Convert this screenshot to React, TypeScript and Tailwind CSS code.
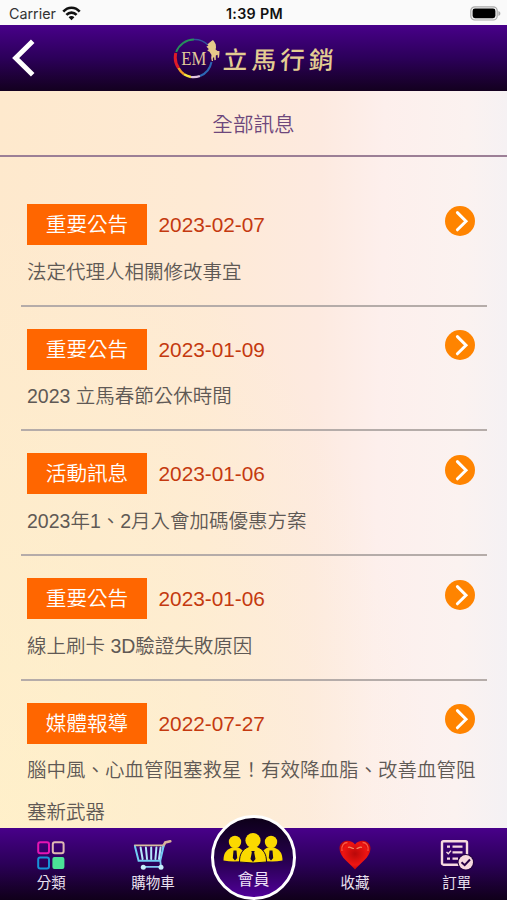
import type { ReactNode } from "react";

interface NewsItem {
  tag: string;
  date: string;
  title: string;
}

const news: NewsItem[] = [
  { tag: "重要公告", date: "2023-02-07", title: "法定代理人相關修改事宜" },
  { tag: "重要公告", date: "2023-01-09", title: "2023 立馬春節公休時間" },
  { tag: "活動訊息", date: "2023-01-06", title: "2023年1、2月入會加碼優惠方案" },
  { tag: "重要公告", date: "2023-01-06", title: "線上刷卡 3D驗證失敗原因" },
  { tag: "媒體報導", date: "2022-07-27", title: "腦中風、心血管阻塞救星！有效降血脂、改善血管阻塞新武器" },
];

const StatusBar = () => (
  <div className="grid h-[25px] shrink-0 grid-cols-3 items-center bg-[#fafafa] pt-[2px] pr-[6px] pl-[9px] font-['Inter','Liberation_Sans',sans-serif] text-[#111]">
    <div className="flex items-center gap-[6px] text-[14.3px] text-[#333]">
      <span>Carrier</span>
      <svg width="19" height="15" viewBox="0 0 19 15" fill="none" stroke="#111" strokeWidth="2.6">
        <path d="M1.3 5.6C6 0.5 13 0.5 17.7 5.6" />
        <path d="M4.4 8.9C7.3 5.9 11.7 5.9 14.6 8.9" />
        <path d="M6.6 11.3C8.2 9.6 10.8 9.6 12.4 11.3L9.5 14.3Z" fill="#111" stroke="none" />
      </svg>
    </div>
    <div className="pr-[1px] text-center text-[14.3px] font-semibold tracking-[0.3px] whitespace-nowrap">1:39 PM</div>
    <svg className="justify-self-end" width="31" height="15" viewBox="0 0 31 15">
      <rect x="0.8" y="0.8" width="26.4" height="13.2" rx="4" fill="#f4f4f4" stroke="#aaa" strokeWidth="1.2" />
      <rect x="2.6" y="2.6" width="22.8" height="9.6" rx="2.4" fill="#000" />
      <path d="M28.4 5V10C31 9 31 6 28.4 5Z" fill="#aaa" />
    </svg>
  </div>
);

const Logo = () => (
  <div className="flex items-center">
    <svg width="48" height="44" viewBox="0 0 48 44" fill="none">
      <g strokeWidth="2">
        <path d="M3.2 16A19.2 19.2 0 0 1 21 3.5" stroke="#268f5c" />
        <path d="M21 3.5A19.2 19.2 0 0 1 35 9" stroke="#31549b" strokeWidth="1.3" />
        <path d="M2.8 17A19 19 0 0 0 5.5 32" stroke="#e11b28" strokeWidth="3" />
        <path d="M5.5 32A19 19 0 0 0 11 38.3" stroke="#f59b22" strokeWidth="2.6" />
        <path d="M11 38.3A19 19 0 0 0 18 41" stroke="#f5e33c" strokeWidth="2.4" />
        <path d="M18 41A19 19 0 0 0 27 40" stroke="#e3c3df" strokeWidth="2.2" />
        <path d="M27 40A19 19 0 0 0 38.5 26" stroke="#2c67b5" />
      </g>
      <path
        d="M36 7L38.5 5L40 4L41.5 6L42.8 8.5L43 11.5L42.6 13.5L44.5 15L46.5 15L46.4 18L46 21.500L44.8 22L44.6 18.8L42.8 19.5L42.8 24L41.4 24.2L41 20.8L39.8 22.5L40 25L38.8 25L38.2 22L38.5 19L36.5 15.8L34.4 14.8L35 13.5L36 13.2L34.5 11.8L33.4 10.5L35.4 9.8L34.4 8.500Z"
        fill="#e6ca8a"
      />
      <text x="20.8" y="28.9" textAnchor="middle" fontFamily="Liberation Serif, serif" fontSize="18.5" textLength="25" lengthAdjust="spacingAndGlyphs" fill="#e2cc9a">
        EM
      </text>
    </svg>
    <span className="mt-[7px] ml-[2px] -skew-x-3 text-[24.5px] leading-none font-medium tracking-[4.1px] text-[#e3cd92]">立馬行銷</span>
  </div>
);

const Header = () => (
  <header className="grid h-[66px] shrink-0 grid-cols-[60px_1fr_60px] items-center bg-linear-to-b from-[#48008a] via-[#2c005a] to-[#13001f]">
    <svg className="ml-3" width="24" height="38" viewBox="0 0 24 38" fill="none" stroke="#fff" strokeWidth="5">
      <path d="M20.7 2.3L3.7 19L20.7 35.7" />
    </svg>
    <div className="flex justify-center pl-[4px]">
      <Logo />
    </div>
  </header>
);

const NewsRow = ({ tag, date, title }: NewsItem) => (
  <li className="h-[102.7px] shrink-0 border-b-2 border-[#b5aca9] px-[6px] last:border-b-0">
    <div className="flex h-[41px] items-center">
      <span className="flex h-full w-[120px] items-center justify-center bg-[#ff6600] pt-[2px] text-[20.6px] font-[350] text-white">{tag}</span>
      <span className="ml-[11.5px] text-[20.8px] text-[#c4390f]">{date}</span>
      <svg className="mt-[-8px] mr-[6px] ml-auto" width="30" height="30" viewBox="0 0 30 30" fill="none">
        <circle cx="15" cy="15" r="15" fill="#ff8400" />
        <path d="M12.4 6.6L21 15.2L12.4 23.8" stroke="#fff" strokeWidth="3" strokeLinecap="round" />
      </svg>
    </div>
    <p className="mt-[6.5px] text-[19.5px] leading-[41.5px] font-[350] text-[#5f5955]">{title}</p>
  </li>
);

const GridIcon = () => (
  <svg width="28" height="29" viewBox="0 0 28 29" fill="none" strokeWidth="2">
    <rect x="1.2" y="1.2" width="10.8" height="11" rx="2" stroke="#e414b4" />
    <rect x="15.8" y="1.2" width="10.8" height="11" rx="2" stroke="#dfb9b4" />
    <rect x="1.2" y="16.4" width="10.8" height="11" rx="2" stroke="#1792d8" />
    <rect x="15.4" y="16" width="12" height="12" rx="2" fill="#4be397" />
  </svg>
);

const CartIcon = () => (
  <svg width="40" height="32" viewBox="0 0 40 32" fill="none" strokeLinecap="round">
    <path d="M1.7 6.3H30" stroke="#d8bd9d" strokeWidth="1.7" />
    <path d="M30 7.5L32.3 3.4L37.3 2.2" stroke="#d9b29a" strokeWidth="2.6" />
    <path d="M2 7.5L5.6 21.8H27.2L30.5 7.5" stroke="#72cdf5" strokeWidth="2" />
    <path d="M7.6 8.5L9.6 20M12.9 8.5L14 20M18.2 8.5V20M23.4 8.5L22.4 20M27.6 8.5L26 20" stroke="#b5e6fc" strokeWidth="2" />
    <path d="M27.3 22L28 27.8H10" stroke="#82c8f1" strokeWidth="1.8" />
    <circle cx="10.3" cy="28.3" r="2.5" fill="#c8effa" />
    <circle cx="28" cy="28.3" r="2.5" fill="#c8effa" />
  </svg>
);

const HeartIcon = () => (
  <svg width="32" height="30" viewBox="0 0 32 30">
    <defs>
      <radialGradient id="heart" cx="50%" cy="45%" r="60%">
        <stop offset="0%" stopColor="#b90809" />
        <stop offset="65%" stopColor="#ef1512" />
        <stop offset="100%" stopColor="#b50008" />
      </radialGradient>
    </defs>
    <path d="M16 29.5C12 24 .5 17.5.5 8.5C.5 0 11.5-1.5 16 4.5C20.5-1.5 31.5 0 31.5 8.5C31.5 17.5 20 24 16 29.5Z" fill="url(#heart)" />
    <path d="M3 11C2 5.5 5 2.5 8.5 2.5M29 11C30 5.5 27 2.5 23.5 2.5" stroke="#fa5944" strokeWidth="1.3" fill="none" />
    <path d="M9 7.5C11 6.3 13 8.7 15 8.5M17.5 8.5C19 8.7 21 6.3 23 7.5" stroke="#f38762" strokeWidth="1.2" fill="none" />
  </svg>
);

const OrderIcon = () => (
  <svg width="34" height="32" viewBox="0 0 34 32" fill="none">
    <rect x="2" y="2.2" width="25" height="23.5" rx="1.5" stroke="#f6d9df" strokeWidth="2.4" />
    <path d="M7 7.7H10M12.5 7.7H22.5M12.5 13.4H22.5M7 19.6H10M12.5 19.6H18" stroke="#f6d9df" strokeWidth="2.3" />
    <path d="M6.5 13L8.3 14.8L11 11.6" stroke="#f6d9df" strokeWidth="1.4" />
    <circle cx="25.8" cy="23.3" r="8.3" fill="#22003f" />
    <circle cx="25.8" cy="23.3" r="7.2" fill="#f6d9df" />
    <path d="M21.5 23.2L24.7 26.2L30 20.5" stroke="#260044" strokeWidth="2" />
  </svg>
);

const MembersIcon = () => (
  <svg width="60" height="32" viewBox="0 0 60 32" fill="#fbd900">
    <circle cx="12" cy="10" r="6.2" />
    <circle cx="48" cy="10" r="6.2" />
    <path d="M.5 28.5C.5 21 3 18 9 15.500H15C20 17.500 22 21 22 28.500Q11 30.500.5 28.500Z" />
    <path d="M38 28.500C38 21 40 17.500 45 15.500H51C57 18 59.500 21 59.500 28.500Q49 30.500 38 28.500Z" />
    <path d="M10.500 18.500H13.500L14.200 26L12 28.500L9.800 26ZM46.500 18.500H49.500L50.200 26L48 28.500L45.800 26Z" fill="#19052e" />
    <path d="M16.500 30C16.500 21.500 19.500 17.500 26 14.500H34C40.500 17.500 43.500 21.500 43.500 30Q30 32 16.500 30Z" stroke="#19052e" strokeWidth="1" />
    <circle cx="30" cy="8.500" r="7.600" />
    <path d="M28.300 19H31.700L31.200 20.500L32.500 27L30 30L27.500 27L28.800 20.500Z" fill="#19052e" />
  </svg>
);

const NavItem = ({ icon, label }: { icon: ReactNode; label: string }) => (
  <a className="flex flex-1 flex-col items-center pt-[11px] pl-[1px] text-[14.5px] text-[#e9e0ef]">
    <span className="flex h-8 items-center">{icon}</span>
    <span className="mt-px leading-[22px]">{label}</span>
  </a>
);

const BottomNav = () => (
  <nav className="relative z-10 flex h-[72px] shrink-0 bg-linear-to-b from-[#48008a] via-[#2b0058] to-[#10001a]">
    <NavItem icon={<GridIcon />} label="分類" />
    <NavItem icon={<CartIcon />} label="購物車" />
    <div className="flex flex-1 justify-center">
      <a className="-mt-[13px] flex h-[85px] w-[85px] shrink-0 flex-col items-center rounded-full border-[3px] border-white bg-linear-to-b from-[#0d0019] via-[#24004a] to-[#500099] pt-[14px]">
        <MembersIcon />
        <span className="mt-[5px] text-[16px] leading-[22px] text-[#f1e4fa]">會員</span>
      </a>
    </div>
    <NavItem icon={<HeartIcon />} label="收藏" />
    <NavItem icon={<OrderIcon />} label="訂單" />
  </nav>
);

const App = () => {
  return (
    <div lang="zh-TW" className="flex h-[900px] w-full flex-col overflow-hidden font-['Liberation_Sans','Noto_Sans_CJK_TC',sans-serif]">
      <StatusBar />
      <Header />
      <main className="flex min-h-0 flex-1 flex-col overflow-hidden bg-[radial-gradient(ellipse_at_0%_100%,#fff3c8aa_0%,#fff3c800_60%),linear-gradient(91deg,#fee9cd_0%,#feead5_40%,#fdeae0_62%,#fdefec_74%,#fbf2f0_90%,#f4f1f4_100%)]">
        <h1 className="flex h-[66px] shrink-0 items-center justify-center border-b-2 border-[#9c7f96] pt-[4px] text-[20.6px] font-[350] text-[#6d477c]">全部訊息</h1>
        <ul className="flex flex-col gap-[22px] pt-[47px] pr-[20px] pl-[21px]">
          {news.map((item, i) => (
            <NewsRow key={i} {...item} />
          ))}
        </ul>
      </main>
      <BottomNav />
    </div>
  );
};

export default App;
